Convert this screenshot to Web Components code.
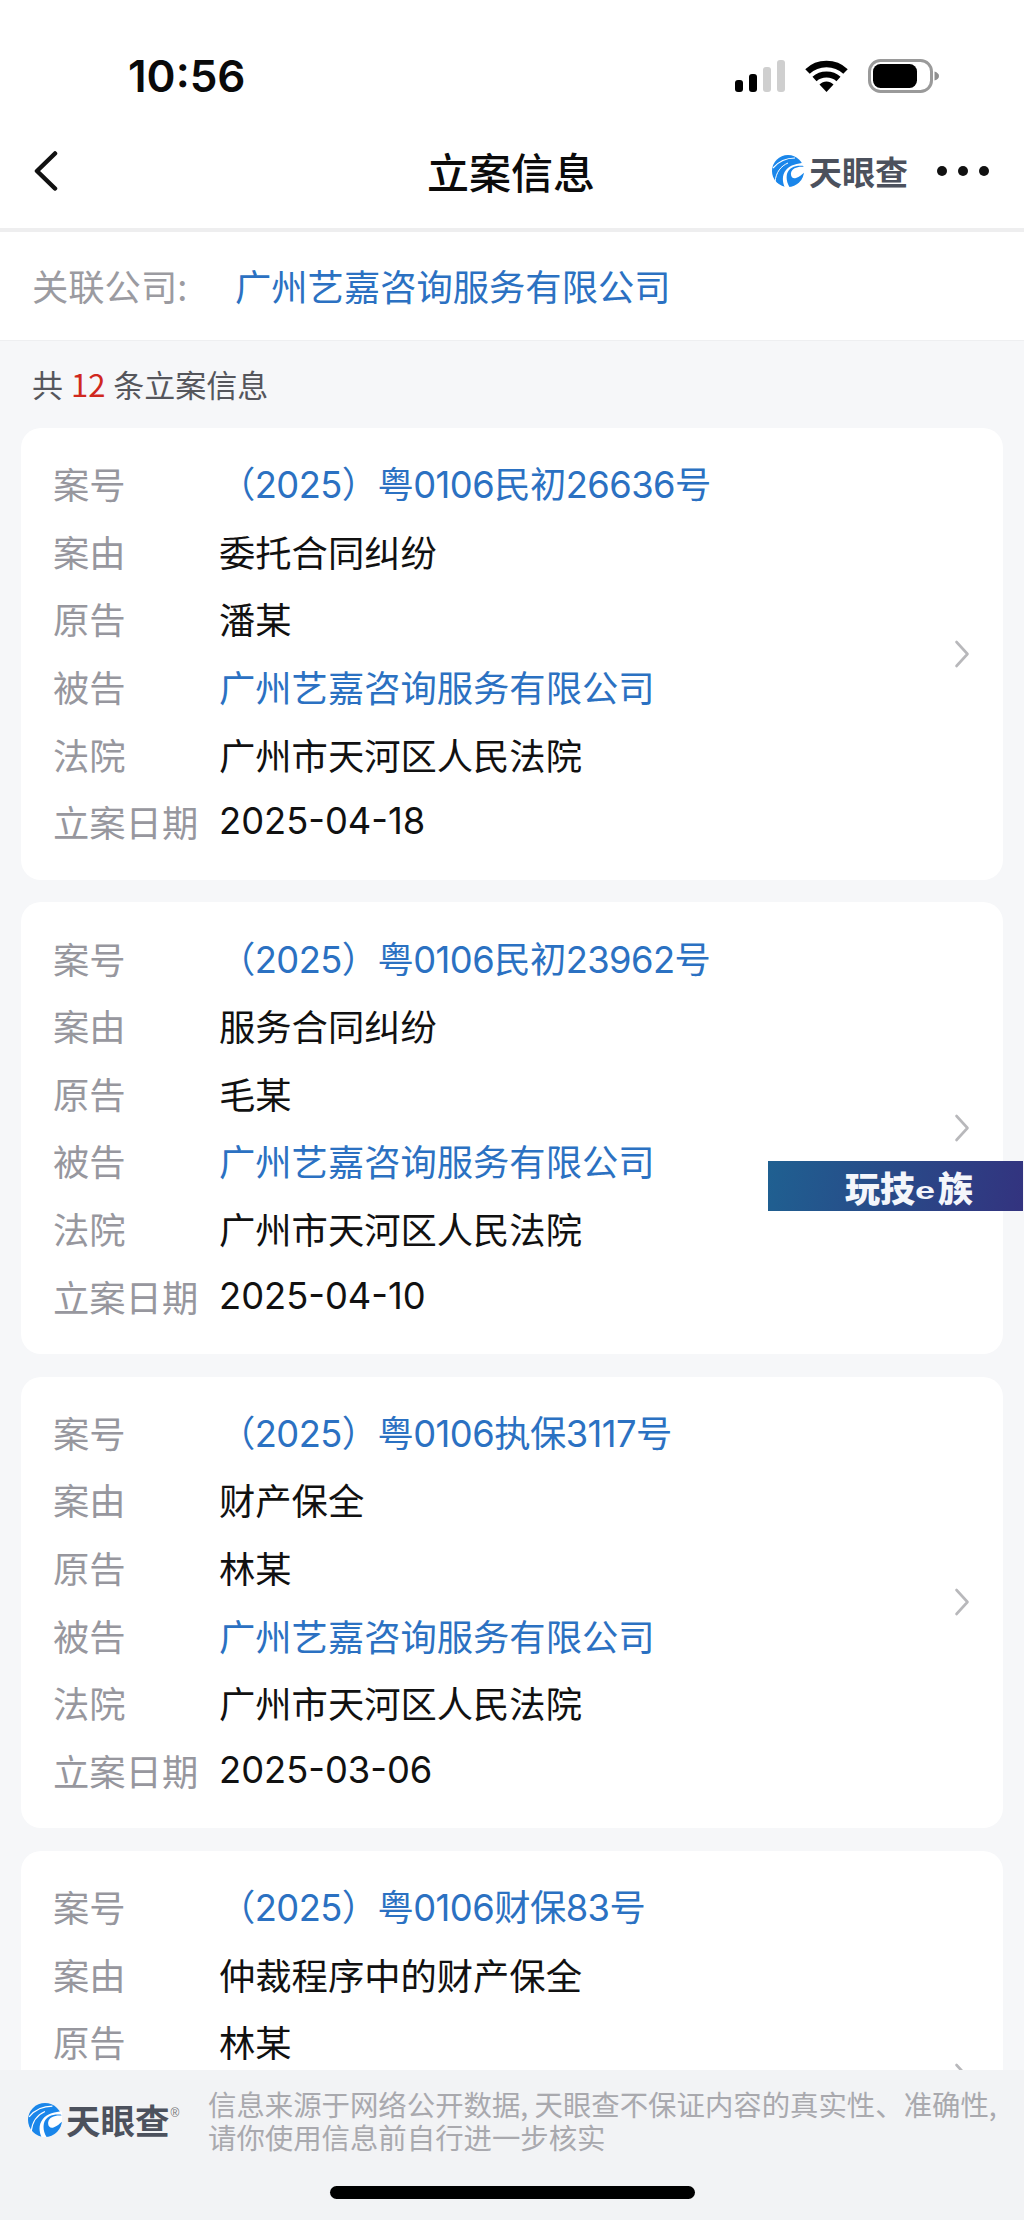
<!DOCTYPE html>
<html lang="zh">
<head>
<meta charset="utf-8">
<title>立案信息</title>
<style>
  html, body { margin: 0; height: 2220px; overflow: hidden; background: #f6f7f9; }
  body { font-family: "Noto Sans CJK SC", "Liberation Sans", sans-serif; position: relative; }
</style>
</head>
<body>
<status-bar></status-bar>
<nav-bar title="立案信息"></nav-bar>
<company-row label="关联公司:" name="广州艺嘉咨询服务有限公司"></company-row>
<count-row count="12"></count-row>

<case-list>
  <case-card>
    <case-row label="案号" link><span>（2025）粤0106民初26636号</span></case-row>
    <case-row label="案由">委托合同纠纷</case-row>
    <case-row label="原告">潘某</case-row>
    <case-row label="被告" link>广州艺嘉咨询服务有限公司</case-row>
    <case-row label="法院">广州市天河区人民法院</case-row>
    <case-row label="立案日期">2025-04-18</case-row>
  </case-card>
  <case-card>
    <case-row label="案号" link><span>（2025）粤0106民初23962号</span></case-row>
    <case-row label="案由">服务合同纠纷</case-row>
    <case-row label="原告">毛某</case-row>
    <case-row label="被告" link>广州艺嘉咨询服务有限公司</case-row>
    <case-row label="法院">广州市天河区人民法院</case-row>
    <case-row label="立案日期">2025-04-10</case-row>
  </case-card>
  <case-card>
    <case-row label="案号" link><span>（2025）粤0106执保3117号</span></case-row>
    <case-row label="案由">财产保全</case-row>
    <case-row label="原告">林某</case-row>
    <case-row label="被告" link>广州艺嘉咨询服务有限公司</case-row>
    <case-row label="法院">广州市天河区人民法院</case-row>
    <case-row label="立案日期">2025-03-06</case-row>
  </case-card>
  <case-card>
    <case-row label="案号" link><span>（2025）粤0106财保83号</span></case-row>
    <case-row label="案由">仲裁程序中的财产保全</case-row>
    <case-row label="原告">林某</case-row>
  </case-card>
</case-list>

<watermark-badge></watermark-badge>
<footer-notice></footer-notice>

<script>
// the blue swirl, used in the nav bar and in the footer
const LOGO_MARK = /* html */`
  <svg viewBox="0 0 32 32" width="100%" height="100%">
    <circle cx="16" cy="16" r="16" fill="#1a86ea"/>
    <path d="M1 13C7 6 14 3 23 3" fill="none" stroke="#fff" stroke-width="1.2"/>
    <path d="M32 11C24 10 17 12 15 19C14 24 15 28 18 33L13 33C10 26 10 20 14 15C18 10 26 8 32 8Z" fill="#fff"/>
    <path d="M3 27C4 17 9 11 16 8" fill="none" stroke="#fff" stroke-width="1"/>
    <path d="M33 12C26 11 20 13 19 18C18.500 22 21 24 24 23C28 22 30 19 33 17Z" fill="#fff"/>
  </svg>`;

class StatusBar extends HTMLElement {
  constructor() {
    super();
    this.attachShadow({ mode: "open" });
    this.shadowRoot.innerHTML = /* html */`
      <style>
        :host { display: flex; height: 110px; background: #fff; box-sizing: border-box; padding: 56px 0 0 128px; }
        .time { font: 600 44px/40px Inter, "Liberation Sans", sans-serif; color: #0a0a0a; width: 607px; }
        .icons { display: flex; gap: 20px; align-items: flex-start; margin-top: 4px; }
      </style>
      <div class="time">10:56</div>
      <div class="icons">
        <svg width="50" height="32" viewBox="0 0 50 32">
          <rect x="0" y="20" width="8" height="12" rx="3" fill="#000"/>
          <rect x="14" y="14" width="8" height="18" rx="3" fill="#000"/>
          <rect x="28" y="7" width="8" height="25" rx="3" fill="#cfcfcf"/>
          <rect x="42" y="0" width="8" height="32" rx="3" fill="#cfcfcf"/>
        </svg>
        <svg width="43" height="32" viewBox="0 0 43 32">
          <path d="M21.500 32 14.500 24.500C18.500 20.500 24.500 20.500 28.500 24.500Z" fill="#000"/>
          <path d="M2.500 11.500C13 1.500 30 1.500 40.500 11.500" fill="none" stroke="#000" stroke-width="6.500"/>
          <path d="M9.500 19C16 13 27 13 33.500 19" fill="none" stroke="#000" stroke-width="6"/>
        </svg>
        <svg width="72" height="34" viewBox="0 0 72 34" style="margin-top:-1px">
          <rect x="1.500" y="1.500" width="62" height="31" rx="11" fill="#fff" stroke="#9a9a9a" stroke-width="3"/>
          <rect x="5" y="5" width="44" height="24" rx="7.500" fill="#000"/>
          <path d="M66.500 12.500C69.500 13.500 71 15 71 17C71 19 69.500 20.500 66.500 21.500Z" fill="#8f8f8f"/>
        </svg>
      </div>`;
  }
}

class NavBar extends HTMLElement {
  constructor() {
    super();
    this.attachShadow({ mode: "open" });
    this.shadowRoot.innerHTML = /* html */`
      <style>
        :host { display: grid; grid-template-columns: 1fr auto 1fr; align-items: center; height: 122px; background: #fff; box-sizing: border-box;
                border-bottom: 4px solid #eeeeef; padding: 4px 35px 0 33px; }
        .back { display: block; }
        h1 { margin: 0; font: 500 42px/1 "Noto Sans CJK SC", sans-serif; color: #0b0b0b; }
        .right { display: flex; align-items: center; justify-self: end; }
        .mark { width: 32px; height: 32px; margin-right: 5px; }
        .brand { font: 700 33px/1 "Noto Sans CJK SC", sans-serif; color: #4c515d; width: 100px; white-space: nowrap; margin-right: 28px; }
        .dots { display: flex; gap: 11px; }
        .dots i { width: 10px; height: 10px; border-radius: 50%; background: #111; }
      </style>
      <svg class="back" width="26" height="40" viewBox="0 0 26 40">
        <path d="M22 2.500 4 20 22 37.500" fill="none" stroke="#111" stroke-width="4.500" stroke-linecap="round" stroke-linejoin="round"/>
      </svg>
      <h1></h1>
      <div class="right">
        <div class="mark">${LOGO_MARK}</div>
        <div class="brand">天眼查</div>
        <div class="dots"><i></i><i></i><i></i></div>
      </div>`;
  }
  connectedCallback() {
    this.shadowRoot.querySelector("h1").textContent = this.getAttribute("title");
  }
}

class CompanyRow extends HTMLElement {
  constructor() {
    super();
    this.attachShadow({ mode: "open" });
    this.shadowRoot.innerHTML = /* html */`
      <style>
        :host { display: flex; align-items: center; height: 109px; background: #fff; padding: 0 0 2px 32px;
                font-size: 36.300px; border-bottom: 1px solid #eeeff1; box-sizing: border-box; }
        .label { color: #9b9ba1; width: 203px; }
        .name { color: #2b71c2; }
      </style>
      <span class="label"></span><span class="name"></span>`;
  }
  connectedCallback() {
    this.shadowRoot.querySelector(".label").textContent = this.getAttribute("label");
    this.shadowRoot.querySelector(".name").textContent = this.getAttribute("name");
  }
}

class CountRow extends HTMLElement {
  constructor() {
    super();
    this.attachShadow({ mode: "open" });
    this.shadowRoot.innerHTML = /* html */`
      <style>
        :host { display: block; height: 87px; padding: 23px 0 0 32px; box-sizing: border-box; font-size: 31px; line-height: 40px; color: #55565c; word-spacing: 1px; }
        b { font-weight: 400; color: #d0281e; }
      </style>
      共 <b></b> 条立案信息`;
  }
  connectedCallback() {
    this.shadowRoot.querySelector("b").textContent = this.getAttribute("count");
  }
}

class CaseList extends HTMLElement {
  constructor() {
    super();
    this.attachShadow({ mode: "open" });
    this.shadowRoot.innerHTML = /* html */`
      <style>
        :host { display: flex; flex-direction: column; gap: 22.700px; padding: 0 21px; }
      </style>
      <slot></slot>`;
  }
}

class CaseCard extends HTMLElement {
  constructor() {
    super();
    this.attachShadow({ mode: "open" });
    this.shadowRoot.innerHTML = /* html */`
      <style>
        :host { display: flex; align-items: center; background: #fff; border-radius: 20px; min-height: 451.600px; }
        .rows { flex: 1; align-self: flex-start; padding: 21.500px 0 24.500px; }
        svg { margin-right: 33px; }
      </style>
      <div class="rows"><slot></slot></div>
      <svg width="16" height="28" viewBox="0 0 16 28">
        <path d="M2.500 2 13.500 14 2.500 26" fill="none" stroke="#b8b8bb" stroke-width="2.600" stroke-linecap="round" stroke-linejoin="round"/>
      </svg>`;
  }
}

class CaseRow extends HTMLElement {
  constructor() {
    super();
    this.attachShadow({ mode: "open" });
    this.shadowRoot.innerHTML = /* html */`
      <style>
        :host { display: flex; align-items: center; height: 67.600px; padding-left: 32px; font-size: 36.300px; color: #111; white-space: nowrap;
                font-family: Inter, "Noto Sans CJK SC", sans-serif; }
        :host([link]) { color: #2b71c2; }
        .label { width: 166px; color: #97979e; flex: none; font-family: "Noto Sans CJK SC", sans-serif; }
        ::slotted(span) { letter-spacing: -.55px; margin-top: -2px; }
      </style>
      <span class="label"></span><slot></slot>`;
  }
  connectedCallback() {
    this.shadowRoot.querySelector(".label").textContent = this.getAttribute("label");
  }
}

// video channel watermark burnt into the screenshot
class WatermarkBadge extends HTMLElement {
  constructor() {
    super();
    this.attachShadow({ mode: "open" });
    this.shadowRoot.innerHTML = /* html */`
      <style>
        :host { position: absolute; left: 768px; top: 1161px; width: 255px; height: 50px; display: flex; align-items: center;
                box-sizing: border-box; padding-left: 77px; color: #f4f6fb;
                background: linear-gradient(100deg, #1f6091, #33337f); font: 800 35px/1 "Noto Sans CJK SC", sans-serif; }
        .e { font: 700 24px/1 "Liberation Sans", sans-serif; width: 23px; transform: scaleX(1.500); transform-origin: left; margin-top: 10px; }
      </style>
      玩技<span class="e">e</span>族`;
  }
}

class FooterNotice extends HTMLElement {
  constructor() {
    super();
    this.attachShadow({ mode: "open" });
    this.shadowRoot.innerHTML = /* html */`
      <style>
        :host { position: absolute; left: 0; right: 0; bottom: 0; height: 150px; background: #f2f3f5; display: block; }
        .top { display: flex; padding: 17px 0 0 28px; }
        .logo { display: flex; align-items: center; width: 180px; height: 35px; margin-top: 15px; flex: none; }
        .mark { width: 34px; height: 34px; flex: none; margin-right: 4px; }
        .brand { font: 700 34.500px/1 "Noto Sans CJK SC", sans-serif; color: #4c515d; white-space: nowrap; }
        sup { font: 400 12px/1 "Liberation Sans", sans-serif; color: #777; margin: -14px 0 0 1px; }
        p { margin: 0; font-size: 28.400px; line-height: 33px; color: #a9a9ae; white-space: nowrap; }
        .bar { position: absolute; left: 330px; top: 116px; width: 365px; height: 13px; border-radius: 7px; background: #000; }
      </style>
      <div class="top">
        <div class="logo"><div class="mark">${LOGO_MARK}</div><div class="brand">天眼查</div><sup>®</sup></div>
        <p>信息来源于网络公开数据, 天眼查不保证内容的真实性、准确性,<br>请你使用信息前自行进一步核实</p>
      </div>
      <div class="bar"></div>`;
  }
}

customElements.define("status-bar", StatusBar);
customElements.define("nav-bar", NavBar);
customElements.define("company-row", CompanyRow);
customElements.define("count-row", CountRow);
customElements.define("case-list", CaseList);
customElements.define("case-card", CaseCard);
customElements.define("case-row", CaseRow);
customElements.define("watermark-badge", WatermarkBadge);
customElements.define("footer-notice", FooterNotice);
</script>
</body>
</html>
